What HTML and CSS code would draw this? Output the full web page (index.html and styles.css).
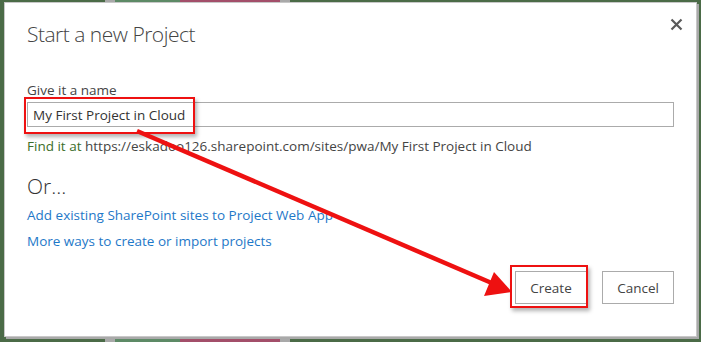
FILE: index.html
```html
<!DOCTYPE html>
<html lang="en">
<head>
  <meta charset="UTF-8">
  <meta name="viewport" content="width=device-width, initial-scale=1.0">
  <title>Start a new Project</title>
  <link rel="stylesheet" href="styles.css">
</head>
<body>
  <div class="dialog">
    <div class="dialog-head">
      <h1>Start a new Project</h1>
      <button class="close" title="Close">
        <svg width="13" height="13" viewBox="0 0 13 13"><path d="M1.5 1.5 L11.5 11.5 M11.5 1.5 L1.5 11.5" stroke="#5a5a5a" stroke-width="2.2"/></svg>
      </button>
    </div>

    <label for="projectName" class="name-label">Give it a name</label>
    <div class="field">
      <input type="text" id="projectName" value="My First Project in Cloud">
      <span class="mark mark-name"></span>
    </div>
    <p class="hint"><span class="find">Find it at</span> https://eskadoo126.sharepoint.com/sites/pwa/My First Project in Cloud</p>

    <h2>Or...</h2>
    <a href="#" class="more">Add existing SharePoint sites to Project Web App</a>
    <a href="#" class="more">More ways to create or import projects</a>

    <div class="actions">
      <div class="btn-wrap">
        <button class="btn">Create</button>
        <span class="mark mark-create"></span>
      </div>
      <button class="btn">Cancel</button>
    </div>

    <!-- annotation arrow -->
    <svg class="arrow" width="701" height="342" viewBox="0 0 701 342">
      <line x1="137" y1="131" x2="494" y2="284" stroke="#ee1111" stroke-width="4.5"/>
      <polygon points="512,292 484,296 494,272" fill="#ee1111"/>
    </svg>
  </div>
</body>
</html>
```

FILE: styles.css
```css
body {
  margin: 0;
  padding: 2px 0 0 4px;
  height: 342px;
  box-sizing: border-box;
  overflow: hidden;
  font-family: "Open Sans", "Noto Sans", sans-serif;
  background: linear-gradient(90deg, #4b6b47 0, #4b6b47 105px, #a9a9a9 105px, #a9a9a9 115px, #5d8a66 115px, #5d8a66 180px, #a34f6a 180px, #a34f6a 280px, #a9a9a9 280px, #a9a9a9 290px, #4b6b47 290px);
}
.dialog
{
  position: relative;
  width: 693px;
  height: 335px;
  box-sizing: border-box;
  background: #fff;
  border: 1px solid #c8c8c8;
  box-shadow: 2px 2px 0 #a9a9a9;
  padding: 0 22px 0 22px;
}
.dialog-head
{
  display: flex;
  justify-content: space-between;
  align-items: flex-start;
}
h1
{
  margin: 17px 0 0 0;
  font-size: 21px;
  font-weight: 300;
  letter-spacing: -0.5px;
  color: #444;
  line-height: 28px;
}
.close
{
  margin: 15px -9px 0 0;
  padding: 0;
  border: none;
  background: none;
  width: 13px;
  height: 13px;
}
.close svg
{
  display: block;
}
.name-label
{
  display: block;
  margin-top: 33px;
  font-size: 13.5px;
  color: #444;
  line-height: 18px;
}
.field
{
  position: relative;
  margin-top: 3px;
}
.field input
{
  display: block;
  width: 100%;
  height: 25px;
  box-sizing: border-box;
  border: 1px solid #ababab;
  padding: 0 5px;
  font-family: inherit;
  font-size: 13.5px;
  color: #333;
  outline: none;
}
.mark
{
  position: absolute;
  border: 2px solid #ee1111;
  box-shadow: 2px 3px 4px rgba(0, 0, 0, 0.3);
}
.mark-name
{
  left: -3px;
  top: -5px;
  width: 167px;
  height: 33px;
}
.hint
{
  margin: 10px 0 0 0;
  font-size: 13.5px;
  line-height: 18px;
  color: #444;
}
.find
{
  color: #3c6e2a;
}
h2
{
  margin: 17px 0 0 0;
  font-size: 21px;
  font-weight: 300;
  color: #333;
  line-height: 28px;
}
.more
{
  display: block;
  font-size: 13.5px;
  line-height: 18px;
  color: #1e78c8;
  text-decoration: none;
  margin-top: 6px;
}
.more + .more
{
  margin-top: 8px;
}
.actions
{
  display: flex;
  justify-content: flex-end;
  gap: 15px;
  margin-top: 21px;
}
.btn-wrap
{
  position: relative;
}
.btn
{
  display: block;
  width: 72px;
  height: 33px;
  border: 1px solid #ababab;
  background: #fff;
  font-family: inherit;
  font-size: 13.5px;
  color: #444;
}
.mark-create
{
  left: -5px;
  top: -6px;
  width: 74px;
  height: 39px;
}
.arrow
{
  position: absolute;
  left: -5px;
  top: -3px;
  pointer-events: none;
}
```
